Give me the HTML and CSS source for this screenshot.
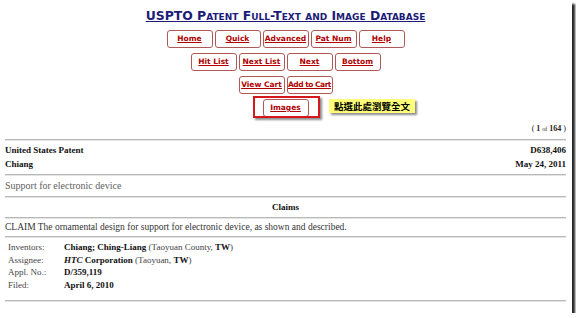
FILE: index.html
```html
<!DOCTYPE html>
<html>
<head>
<meta charset="utf-8">
<link rel="stylesheet" href="styles.css">
</head>
<body>
<div class="frame">
  <div class="title"><a href="#">USPTO Patent Full-Text and Image Database</a></div>
  <div class="nav">
    <div class="row">
      <a class="btn" href="#">Home</a><a class="btn" href="#">Quick</a><a class="btn" href="#">Advanced</a><a class="btn" href="#">Pat Num</a><a class="btn" href="#">Help</a>
    </div>
    <div class="row">
      <a class="btn" href="#">Hit List</a><a class="btn" href="#">Next List</a><a class="btn" href="#">Next</a><a class="btn" href="#">Bottom</a>
    </div>
    <div class="row">
      <a class="btn" href="#">View Cart</a><a class="btn tight" href="#">Add to Cart</a>
    </div>
    <div class="row images-row">
      <div class="highlight"><a class="btn" href="#">Images</a></div>
      <div class="note">點選此處瀏覽全文</div>
    </div>
  </div>
  <div class="count"><b>1</b> <span class="of">of</span> <b>164</b> )</div>
  <div class="rule"></div>
  <div class="pair first"><b>United States Patent</b><b>D638,406</b></div>
  <div class="pair"><b>Chiang</b><b>May 24, 2011</b></div>
  <div class="rule"></div>
  <div class="subject">Support for electronic device</div>
  <div class="rule"></div>
  <div class="claims-head">Claims</div>
  <div class="rule"></div>
  <div class="claim">CLAIM The ornamental design for support for electronic device, as shown and described.</div>
  <div class="rule"></div>
  <div class="info">
    <div class="lbl">Inventors:</div><div class="val"><b>Chiang; Ching-Liang</b> (Taoyuan County, <b>TW</b>)</div>
    <div class="lbl">Assignee:</div><div class="val"><b><i>HTC</i> Corporation</b> (Taoyuan, <b>TW</b>)</div>
    <div class="lbl">Appl. No.:</div><div class="val"><b>D/359,119</b></div>
    <div class="lbl">Filed:</div><div class="val"><b>April 6, 2010</b></div>
  </div>
  <div class="rule"></div>
</div>
</body>
</html>
```
FILE: styles.css
```css
html, body {
  margin: 0;
  padding: 0;
  background: #ffffff;
}
.frame {
  width: 572px;
  height: 313px;
  box-sizing: border-box;
  background: #ffffff;
  box-shadow: 3px 4px 2px rgba(0,0,0,0.85);
  padding: 0 6px 0 5px;
  font-family: "Liberation Serif", "DejaVu Serif", serif;
  font-size: 9px;
  color: #111;
  overflow: hidden;
}
.title {
  text-align: center;
  padding-top: 8px;
  height: 16px;
  line-height: 16px;
  margin-bottom: 6px;
  font-family: "DejaVu Sans", Verdana, sans-serif;
  font-weight: bold;
  font-variant: small-caps;
  font-size: 12.4px;
}
.title a {
  color: #1c1c78;
  text-decoration: underline;
}
.nav {
  display: flex;
  flex-direction: column;
  gap: 5px;
}
.row {
  display: flex;
  justify-content: center;
  gap: 2px;
  height: 18px;
}
.btn {
  width: 46px;
  height: 18px;
  box-sizing: border-box;
  border: 1px solid #b05858;
  border-radius: 3px;
  display: flex;
  align-items: center;
  justify-content: center;
  padding-bottom: 1px;
  font-family: "DejaVu Sans", Verdana, sans-serif;
  font-weight: bold;
  font-size: 7.5px;
  color: #b00000;
  text-decoration: underline;
  white-space: nowrap;
  background: #fff;
}
.btn.tight {
  letter-spacing: -0.5px;
}
.images-row {
  position: relative;
}
.highlight {
  position: relative;
  display: flex;
}
.highlight::before {
  content: "";
  position: absolute;
  left: -10px;
  top: -3px;
  width: 67px;
  height: 22px;
  box-sizing: border-box;
  border: 2px solid #d4181c;
  box-shadow: 2px 2px 2px rgba(0,0,0,0.45);
}
.note {
  position: absolute;
  left: 324px;
  top: 0;
  width: 86px;
  height: 14px;
  box-sizing: border-box;
  background: #ffff7a;
  box-shadow: 2px 2px 2px rgba(0,0,0,0.45);
  font-family: "Noto Sans CJK TC", "Noto Sans CJK SC", sans-serif;
  font-weight: bold;
  font-size: 9.5px;
  line-height: 14px;
  text-align: center;
  color: #000;
}
.count {
  margin-top: 5px;
  line-height: 14px;
  text-align: right;
  font-size: 8px;
  color: #222;
}
.count::before {
  content: "( ";
}
.count .of {
  font-size: 6px;
}
.rule {
  border-top: 1px solid #b8b8b8;
  border-bottom: 1px solid #e4e4e4;
  margin: 3px 0 3px;
}
.pair {
  display: flex;
  justify-content: space-between;
  line-height: 14px;
  font-size: 9px;
}
.pair.first {
  margin-top: -1px;
}
.subject {
  line-height: 14px;
  font-size: 10px;
  color: #606060;
}
.claims-head {
  text-align: center;
  font-weight: bold;
  line-height: 13px;
  font-size: 9px;
}
.claim {
  line-height: 11px;
  font-size: 9.5px;
  color: #333;
}
.info {
  display: grid;
  grid-template-columns: 56px auto;
  padding: 0 0 6px 3px;
  line-height: 12.5px;
  font-size: 9px;
}
.lbl {
  color: #444;
}
.val {
  color: #444;
}
.val b {
  color: #111;
}
```
